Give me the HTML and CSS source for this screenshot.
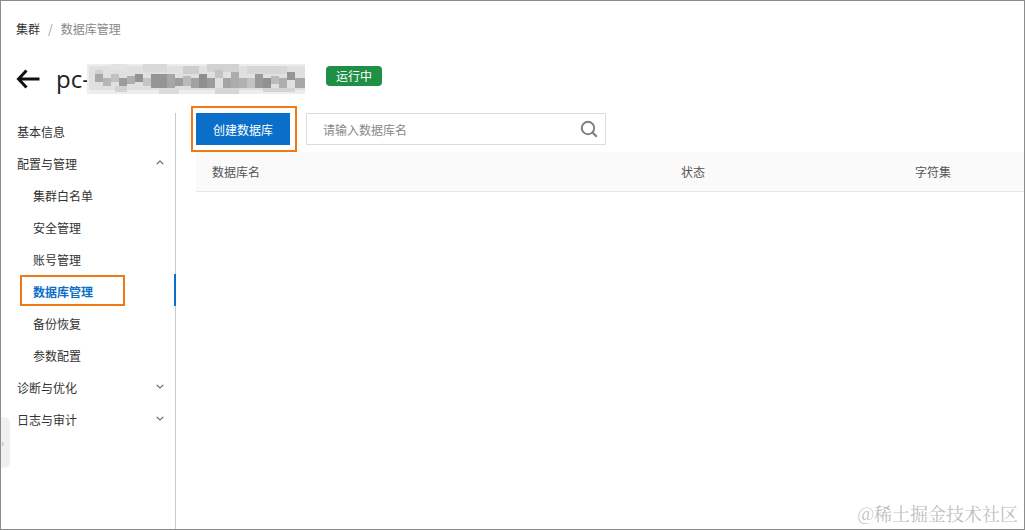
FILE: index.html
```html
<!DOCTYPE html>
<html lang="zh">
<head>
<meta charset="utf-8">
<title>数据库管理</title>
<link rel="stylesheet" href="styles.css">
</head>
<body>
<div class="frame">
  <nav class="crumbs"><span class="crumb-root">集群</span><span class="crumb-sep">/</span><span class="crumb-cur">数据库管理</span></nav>
  <header class="title-row">
    <svg class="back" width="24" height="20" viewBox="0 0 24 20"><path d="M23.500 10H2.500M10.500 1.500L2.500 10l8 8.500" fill="none" stroke="#111" stroke-width="3"/></svg>
    <h1 class="title">pc-</h1>
    <svg class="mosaic" width="218" height="30" viewBox="0 0 218 30" shape-rendering="crispEdges">
      <rect x="0" y="0" width="218" height="30" fill="#fff"/>
      <rect x="2" y="2" width="216" height="24" fill="#f1f1f1"/>
      <rect x="8" y="6" width="8" height="8" fill="#e0e0e0"/><rect x="24" y="0" width="16" height="6" fill="#f4f4f4"/><rect x="56" y="0" width="24" height="8" fill="#e9e9e9"/><rect x="96" y="2" width="16" height="8" fill="#dcdcdc"/><rect x="120" y="0" width="32" height="8" fill="#e2e2e2"/><rect x="160" y="2" width="40" height="8" fill="#e6e6e6"/>
      <rect x="8" y="10" width="8" height="8" fill="#b5b5b5"/><rect x="16" y="14" width="8" height="8" fill="#c4c4c4"/><rect x="24" y="10" width="8" height="8" fill="#d0d0d0"/><rect x="32" y="14" width="8" height="8" fill="#a8a8a8"/><rect x="40" y="12" width="8" height="8" fill="#bcbcbc"/><rect x="48" y="10" width="8" height="8" fill="#9e9e9e"/><rect x="56" y="14" width="8" height="8" fill="#d4d4d4"/><rect x="64" y="10" width="16" height="14" fill="#a0a0a0"/><rect x="80" y="10" width="8" height="14" fill="#b4b4b4"/><rect x="88" y="14" width="8" height="8" fill="#a8a8a8"/><rect x="96" y="12" width="8" height="10" fill="#c8c8c8"/><rect x="104" y="14" width="8" height="10" fill="#aeaeae"/><rect x="112" y="10" width="8" height="14" fill="#9a9a9a"/><rect x="120" y="14" width="8" height="10" fill="#a8a8a8"/><rect x="128" y="6" width="8" height="8" fill="#d2d2d2"/><rect x="136" y="14" width="8" height="10" fill="#b0b0b0"/><rect x="144" y="8" width="8" height="16" fill="#b9b9b9"/><rect x="152" y="14" width="8" height="10" fill="#bebebe"/><rect x="160" y="14" width="8" height="10" fill="#d2d2d2"/><rect x="168" y="10" width="8" height="14" fill="#a4a4a4"/><rect x="176" y="14" width="8" height="10" fill="#9c9c9c"/><rect x="184" y="12" width="8" height="8" fill="#c8c8c8"/><rect x="192" y="14" width="8" height="10" fill="#bcbcbc"/><rect x="200" y="8" width="8" height="8" fill="#a0a0a0"/><rect x="208" y="14" width="10" height="10" fill="#b4b4b4"/>
      <rect x="28" y="22" width="12" height="6" fill="#e2e2e2"/><rect x="72" y="24" width="20" height="6" fill="#ececec"/><rect x="128" y="24" width="24" height="6" fill="#e6e6e6"/><rect x="176" y="24" width="32" height="4" fill="#e4e4e4"/>
    </svg>
    <span class="status">运行中</span>
  </header>
  <div class="body">
    <aside class="side">
      <div class="item">基本信息</div>
      <div class="item has-caret">配置与管理<svg class="caret" width="8" height="5" viewBox="0 0 10 6"><path d="M1 5l4-4 4 4" fill="none" stroke="#555" stroke-width="1.300"/></svg></div>
      <div class="item sub">集群白名单</div>
      <div class="item sub">安全管理</div>
      <div class="item sub">账号管理</div>
      <div class="item sub active"><span class="mark mark-menu"></span>数据库管理</div>
      <div class="item sub">备份恢复</div>
      <div class="item sub">参数配置</div>
      <div class="item has-caret">诊断与优化<svg class="caret" width="8" height="5" viewBox="0 0 10 6"><path d="M1 1l4 4 4-4" fill="none" stroke="#555" stroke-width="1.300"/></svg></div>
      <div class="item has-caret">日志与审计<svg class="caret" width="8" height="5" viewBox="0 0 10 6"><path d="M1 1l4 4 4-4" fill="none" stroke="#555" stroke-width="1.300"/></svg></div>
      <div class="handle"><span class="handle-arrow">›</span></div>
    </aside>
    <main class="content">
      <div class="toolbar">
        <button class="create"><span class="mark mark-btn"></span>创建数据库</button>
        <div class="search">
          <span class="placeholder">请输入数据库名</span>
          <svg width="18" height="18" viewBox="0 0 18 18"><circle cx="8" cy="8" r="6.200" fill="none" stroke="#808080" stroke-width="2"/><path d="M12.500 12.500l4.300 4.300" stroke="#808080" stroke-width="2.200"/></svg>
        </div>
      </div>
      <div class="thead">
        <span class="col col-name">数据库名</span>
        <span class="col col-state">状态</span>
        <span class="col">字符集</span>
      </div>
    </main>
  </div>
  <div class="watermark">@稀土掘金技术社区</div>
</div>
</body>
</html>
```
FILE: styles.css
```css
* { box-sizing: border-box; }
html, body { margin: 0; height: 100%; overflow: hidden; }
body { background: #fff; font-family: "Noto Sans CJK SC", "Liberation Sans", sans-serif; color: #333; }
.frame { position: relative; width: 1025px; height: 530px; border: 1px solid #8c8c8c; display: flex; flex-direction: column; overflow: hidden; }
.crumbs { display: flex; align-items: center; height: 18px; margin: 19px 0 0 15px; font-size: 12px; line-height: 18px; }
.crumb-root { color: #333; }
.crumb-sep { color: #999; margin: 0 8px; }
.crumb-cur { color: #888; }
.title-row { display: flex; align-items: center; height: 30px; margin: 26px 0 0 15px; }
.back { flex: none; }
.title { margin: 0 0 0 16px; font: 400 24px/30px "Open Sans", "Liberation Sans", sans-serif; color: #222; }
.mosaic { flex: none; margin-left: -3px; filter: brightness(.93) blur(.6px); }
.status { flex: none; width: 56px; height: 20px; margin: 0 0 6px 21px; background: #1f8f45; color: #fff; border-radius: 4px; font-size: 12px; line-height: 20px; text-align: center; }
.body { display: flex; flex: 1; min-height: 0; margin-top: 19px; }
.side { position: relative; flex: none; width: 175px; padding-top: 2px; border-right: 1px solid #c9c9c9; }
.item { position: relative; display: flex; align-items: center; height: 32px; padding-left: 16px; font-size: 12px; color: #333; }
.sub { padding-left: 32px; }
.caret { position: absolute; right: 11px; top: 13px; }
.active { color: #0a6fc9; font-weight: 700; }
.active::after { content: ""; position: absolute; right: -1px; top: -1px; width: 2px; height: 32px; background: #0a6fc9; }
.mark { position: absolute; border: 2px solid #ed7a14; pointer-events: none; }
.mark-menu { left: 19px; top: 0; width: 105px; height: 31px; }
.handle { position: absolute; left: -1px; top: 304px; width: 10px; height: 51px; background: #f0f0f0; border-radius: 0 6px 6px 0; }
.handle-arrow { display: block; font-size: 10px; line-height: 51px; color: #aaa; text-align: left; padding-left: 1px; }
.content { flex: 1; min-width: 0; padding: 0 0 0 20px; }
.toolbar { display: flex; align-items: center; gap: 16px; height: 32px; }
.create { position: relative; flex: none; width: 94px; height: 32px; padding: 0; border: 0; background: #0a6fc9; color: #fff; font: inherit; font-size: 12px; }
.mark-btn { left: -5px; top: -7px; width: 106px; height: 46px; }
.search { flex: none; display: flex; align-items: center; justify-content: space-between; width: 300px; height: 32px; padding: 0 7px 0 16px; border: 1px solid #dcdcdc; }
.placeholder { font-size: 12px; color: #888; }
.thead { display: flex; align-items: center; height: 40px; margin-top: 7px; padding-left: 16px; background: #fafafa; border-bottom: 1px solid #e6e6e6; font-size: 12px; color: #555; }
.col { flex: none; }
.col-name { width: 469px; }
.col-state { width: 234px; }
.watermark { position: absolute; right: 6px; bottom: 4px; font-family: "Noto Serif CJK SC", "Noto Sans CJK SC", sans-serif; font-size: 18px; line-height: 24px; color: rgba(120,120,120,.5); }
```
